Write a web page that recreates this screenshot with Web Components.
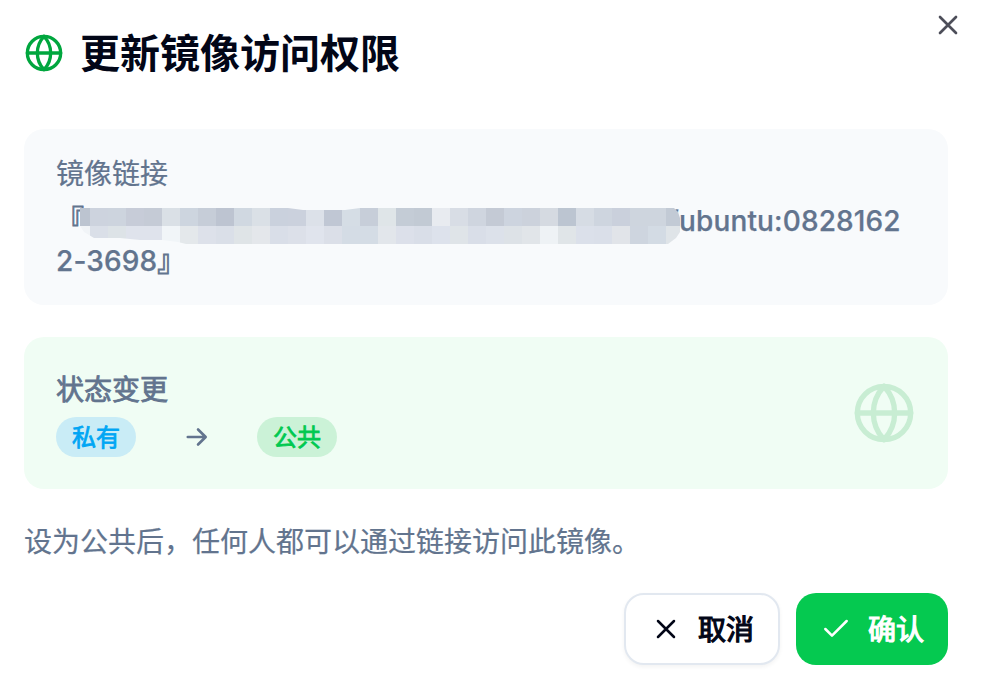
<!DOCTYPE html>
<html lang="zh-CN">
<head>
<meta charset="utf-8">
<title>更新镜像访问权限</title>
<style>
  html, body { margin: 0; background: #fff; }
  body { width: 984px; height: 684px; overflow: hidden; font-family: Inter, "Noto Sans CJK SC", sans-serif; color: #020617; }
</style>
</head>
<body>
<access-dialog></access-dialog>
<script>
const define = (name, html, init) => customElements.define(name, class extends HTMLElement {
  constructor() {
    super();
    this.attachShadow({ mode: 'open' }).innerHTML = html;
  }
  connectedCallback() { if (init) init(this); }
});

const ICONS = {
  globe: '<circle cx="12" cy="12" r="10"/><path d="M12 2a14.5 14.5 0 0 0 0 20 14.5 14.5 0 0 0 0-20"/><path d="M2 12h20"/>',
  close: '<path d="M18 6 6 18M6 6l12 12"/>',
  check: '<path d="M20 6 9 17l-5-5"/>',
  arrow: '<path d="M5.1 12h13.2M12.8 6.4l5.7 5.6-5.7 5.6"/>'
};

define('line-icon', `
  <style>
    :host { display: block; flex: none; width: var(--size, 32px); height: var(--size, 32px); }
    svg { display: block; width: 100%; height: 100%; fill: none; stroke: currentColor; stroke-width: var(--stroke, 2); stroke-linecap: round; stroke-linejoin: round; }
  </style>
  <svg viewBox="0 0 24 24"></svg>`,
  el => { el.shadowRoot.querySelector('svg').innerHTML = ICONS[el.getAttribute('name')]; });

define('info-panel', `
  <style>
    :host { display: flex; box-sizing: border-box; border-radius: 20px; padding: 0 32px; color: #62748e; font-size: 28px; line-height: 40px; }
  </style>
  <slot></slot>`);

define('status-pill', `
  <style>
    :host { display: flex; align-items: center; justify-content: center; box-sizing: border-box; padding-top: 2px; width: 80px; height: 40px; border-radius: 20px; font-size: 24px; line-height: 32px; font-weight: 400; -webkit-text-stroke: .8px currentColor; }
    :host([kind="private"]) { background: #c9ecf6; color: #00a6f4; }
    :host([kind="public"]) { background: #cbf2d7; color: #00c950; }
  </style>
  <slot></slot>`);

define('action-button', `
  <style>
    :host { display: flex; align-items: center; box-sizing: border-box; height: 72px; border-radius: 20px; padding: 0 24px; font-size: 28px; line-height: 40px; font-weight: 400; }
    :host([kind="outline"]) { width: 156px; border: 2px solid #e2e8f0; background: #fff; box-shadow: 0 2px 4px rgba(0,0,0,.05); }
    :host([kind="primary"]) { width: 152px; background: #05c950; color: #fff; }
    line-icon { --stroke: 1.9; margin-right: 16px; }
    span { white-space: nowrap; padding-top: 2px; -webkit-text-stroke: 1.2px currentColor; }
  </style>
  <line-icon></line-icon><span><slot></slot></span>`,
  el => {
    const icon = el.shadowRoot.querySelector('line-icon');
    icon.setAttribute('name', el.getAttribute('icon'));
    icon.connectedCallback();
  });

define('redacted-text', `
  <style>
    :host { display: grid; grid-template: 18px 18px / repeat(34, 18px); width: 608px; height: 36px; overflow: hidden;
      clip-path: polygon(8px 0, 216px 0, 231px 2px, 273px 2px, 288px 0, 602px 0, 606px 4px, 608px 10px, 608px 24px, 604px 30px, 596px 36px, 114px 36px, 106px 34px, 90px 32px, 68px 32px, 48px 30px, 22px 30px, 12px 24px, 8px 18px); }
  </style>`,
  el => {
    const rows = [
      'bcc4d0 cdd3de cdd4de c7ccd8 c5cbd6 dae0e6 cdd5df c6cdd8 bdc4d1 d0d8e1 dae0e6 cad1dd cbd1dd dce1e9 c0c7d4 d5dde5 c7ced9 dfe5e8 c4ccd6 c2cad4 e8ebf0 d8dde5 cfd5df c4cad5 cdd4df ccd2dc d5dae1 bcc5d1 d6dce4 ced5df cad0dc ced5de ced5de c2cad5',
      'f1f4f7 dadfe8 dde3e7 dfe3ec dfe3ec f1f5f8 e4e8eb dde1ea dadfe8 dfe4e7 e4e7eb d9dee8 dce0e9 e0e4ed dbdfe8 d4dce5 d4dce5 e2e6eb dce0ea d9dee8 dde2ec dfe4e8 d9dee8 dce1ea dde2e7 e1e5e9 eef2f5 e0e5e8 dbe0ea dadfe9 e1e4e9 ced5df d3dbe4 dfe4e8'
    ];
    for (const color of rows.join(' ').split(' ')) {
      const cell = document.createElement('i');
      cell.style.background = '#' + color;
      el.shadowRoot.append(cell);
    }
  });

define('image-link', `
  <style>
    :host { display: block; position: relative; font-weight: 500; letter-spacing: .14px; -webkit-text-stroke: .25px currentColor; }
    .line { display: flex; height: 40px; white-space: pre; }
    .open { width: 28px; }
    .open, .end { -webkit-text-stroke: .8px currentColor; }
    .tail { margin-left: 584.5px; }
    redacted-text { position: absolute; left: 16px; top: 7px; }
  </style>
  <div class="line"><span class="open">『</span><span class="tail">/ubuntu:0828162</span></div>
  <div class="line">2-3698<span class="end">』</span></div>
  <redacted-text></redacted-text>`);

define('access-dialog', `
  <style>
    :host { display: flex; flex-direction: column; box-sizing: border-box; width: 984px; height: 684px; padding: 25px 36px 0 24px; }
    header { display: flex; align-items: center; height: 56px; gap: 16px; }
    header > line-icon { --size: 40px; color: #00a63e; }
    h1 { margin: 0; padding-top: 2px; font-size: 40px; line-height: 56px; font-weight: 600; }
    .close { position: absolute; left: 932px; top: 9px; color: #4d4e59; }
    .link { height: 176px; margin-top: 48px; flex-direction: column; padding-top: 25px; background: #f8fafc; }
    .caption { -webkit-text-stroke: .2px currentColor; }
    image-link { margin-top: 7px; }
    .state { height: 152px; margin-top: 32px; align-items: center; justify-content: space-between; background: #f0fdf4; }
    .label { box-sizing: border-box; padding-top: 1px; -webkit-text-stroke: .8px currentColor; height: 40px; margin-bottom: 8px; }
    .flow { display: flex; align-items: center; }
    .flow line-icon { margin: 0 44.5px; }
    .state > line-icon { --size: 64px; color: #c8edd3; }
    p { margin: 33px 0 0; font-size: 28px; line-height: 40px; color: #62748e; -webkit-text-stroke: .2px currentColor; }
    footer { display: flex; justify-content: flex-end; gap: 16px; margin-top: 31px; }
  </style>
  <line-icon class="close" name="close"></line-icon>
  <header><line-icon name="globe"></line-icon><h1>更新镜像访问权限</h1></header>
  <info-panel class="link"><div class="caption">镜像链接</div><image-link></image-link></info-panel>
  <info-panel class="state">
    <div>
      <div class="label">状态变更</div>
      <div class="flow"><status-pill kind="private">私有</status-pill><line-icon name="arrow"></line-icon><status-pill kind="public">公共</status-pill></div>
    </div>
    <line-icon name="globe"></line-icon>
  </info-panel>
  <p>设为公共后，任何人都可以通过链接访问此镜像。</p>
  <footer>
    <action-button kind="outline" icon="close">取消</action-button>
    <action-button kind="primary" icon="check">确认</action-button>
  </footer>`);
</script>
</body>
</html>
